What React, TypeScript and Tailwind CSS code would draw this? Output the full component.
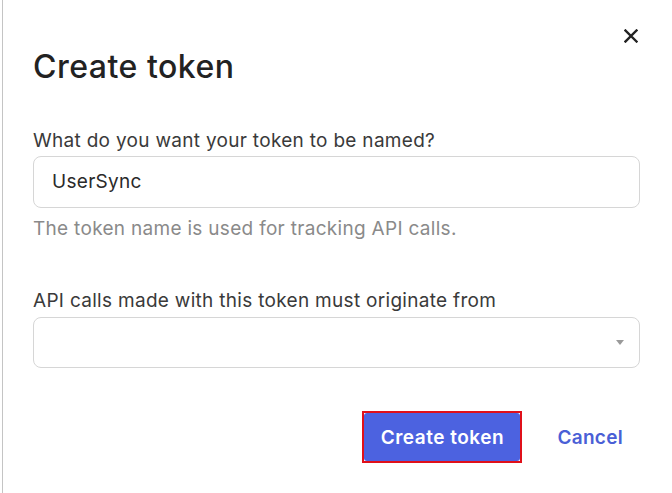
import React from "react";

export default function App() {
  return (
    <div
      className="w-[672px] h-[493px] bg-white flex overflow-hidden"
      style={{ fontFamily: "Inter, 'Noto Sans', sans-serif" }}
    >
      <div className="w-[2px] shrink-0 bg-white" />
      <div className="w-px shrink-0 bg-[#c4c4c4]" />
      <div className="relative flex-1 flex flex-col pl-[30px] pr-[32px] pt-[49px]">
        <button className="absolute top-[29px] right-[34px] w-[14px] h-[14px] flex items-center justify-center">
          <svg width="14" height="14" viewBox="0 0 14 14">
            <path d="M1.5 1.5 L12.5 12.5 M12.5 1.5 L1.5 12.5" stroke="#222" strokeWidth="2.4" strokeLinecap="square" />
          </svg>
        </button>
        <h1 className="text-[32px] leading-[36px] font-medium text-[#222] tracking-[0.5px]">Create token</h1>
        <label className="mt-[44px] text-[19px] leading-[24px] text-[#3a3a3a] tracking-[0.3px]">
          What do you want your token to be named?
        </label>
        <div className="mt-[3px] h-[52px] rounded-[8px] border border-[#d6d6d6] flex items-center px-[18px] pt-[1px] text-[19px] tracking-[0.3px] text-[#2a2a2a]">
          UserSync
        </div>
        <p className="mt-[9px] text-[19px] leading-[24px] text-[#8a8a8a] tracking-[0.3px]">
          The token name is used for tracking API calls.
        </p>
        <label className="mt-[48px] text-[19px] leading-[24px] text-[#3a3a3a] tracking-[0.3px]">
          API calls made with this token must originate from
        </label>
        <div className="mt-[4px] h-[51px] rounded-[8px] border border-[#d6d6d6] flex items-center justify-end pr-[15px]">
          <svg width="8" height="6" viewBox="0 0 8 6">
            <path d="M0 0 L8 0 L4 5 Z" fill="#9a9a9a" />
          </svg>
        </div>
        <div className="mt-[43px] flex items-center justify-end">
          <div className="border-2 border-[#e0101a] w-[160px] h-[52px]">
            <button className="w-full h-full pt-[3px] bg-[#4c62e0] rounded-[3px] text-white text-[19px] font-semibold tracking-[0.5px]">
              Create token
            </button>
          </div>
          <button className="ml-[18px] px-[17px] pt-[3px] h-[52px] text-[19px] font-semibold tracking-[0.3px] text-[#4a5fd6]">
            Cancel
          </button>
        </div>
      </div>
    </div>
  );
}
